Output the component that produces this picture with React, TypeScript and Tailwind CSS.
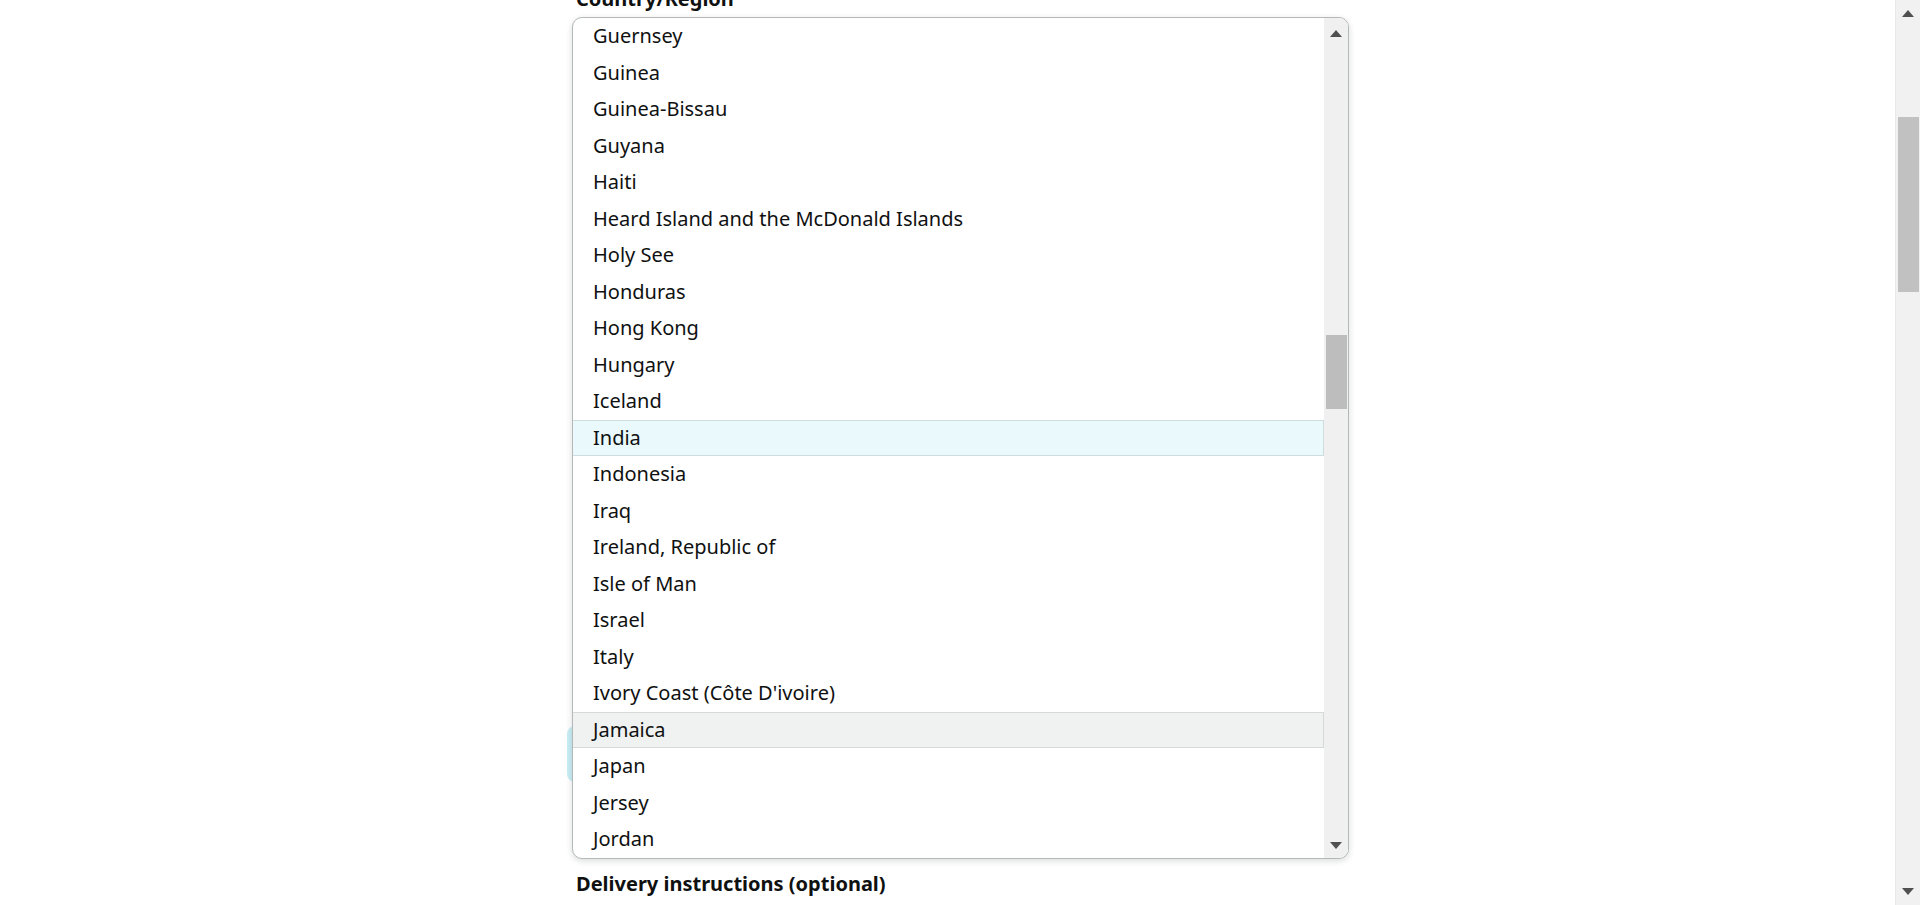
import React from 'react';

const countries = [
  'Guernsey',
  'Guinea',
  'Guinea-Bissau',
  'Guyana',
  'Haiti',
  'Heard Island and the McDonald Islands',
  'Holy See',
  'Honduras',
  'Hong Kong',
  'Hungary',
  'Iceland',
  'India',
  'Indonesia',
  'Iraq',
  'Ireland, Republic of',
  'Isle of Man',
  'Israel',
  'Italy',
  "Ivory Coast (Côte D'ivoire)",
  'Jamaica',
  'Japan',
  'Jersey',
  'Jordan',
];

const Arrow: React.FC<{ up?: boolean }> = ({ up }) => (
  <svg width="12" height="7" viewBox="0 0 12 7" className="block">
    {up ? <polygon points="6,0 12,7 0,7" fill="#505050" /> : <polygon points="0,0 12,0 6,7" fill="#505050" />}
  </svg>
);

const Row: React.FC<{ name: string }> = ({ name }) => {
  if (name === 'India') {
    return (
      <div className="h-[36.5px] -ml-px flex items-center pl-[20px] bg-[#e9f9fc] border border-[#cfdde0] border-l-[#007185]">
        {name}
      </div>
    );
  }
  if (name === 'Jamaica') {
    return (
      <div className="h-[36.5px] -ml-px flex items-center pl-[20px] bg-[#f0f2f2] border border-[#d5d9d9]">
        {name}
      </div>
    );
  }
  return <div className="h-[36.5px] flex items-center pl-5">{name}</div>;
};

export default function App() {
  return (
    <div
      className="h-[905px] w-[1920px] overflow-hidden flex bg-white text-[#0f1111]"
      style={{ fontFamily: '"Noto Sans", "Open Sans", Arial, sans-serif' }}
    >
      {/* ページ本体 */}
      <div className="flex-1 min-w-0">
        <div className="ml-[572px] w-[777px] flex flex-col">
          <div className="-mt-[13px] h-[30px] pl-[4px] text-[20px] font-bold leading-[24px]">Country/Region</div>

          <div className="relative">
            {/* 下にあるボタンのフォーカス */}
            <div className="absolute left-[-5px] top-[709px] w-[40px] h-[56px] rounded-lg bg-[#c9eef5]" />

            {/* ドロップダウン */}
            <div className="relative h-[842px] rounded-[10px] border border-[#b4b8b8] bg-white shadow-[0_2px_6px_rgba(15,17,17,0.15)] flex overflow-hidden">
              <div className="flex-1 min-w-0 text-[20px]">
                {countries.map((c) => (
                  <Row key={c} name={c} />
                ))}
              </div>
              <div className="w-[24px] bg-[#f0f0f0] flex flex-col items-center">
                <div className="pt-[12px]">
                  <Arrow up />
                </div>
                <div className="mt-[298px] w-[21px] h-[74px] bg-[#bdbdbd]" />
                <div className="flex-1" />
                <div className="pb-[9px]">
                  <Arrow />
                </div>
              </div>
            </div>
          </div>

          <div className="mt-[13px] pl-[4px] text-[20px] font-bold leading-[24px]">Delivery instructions (optional)</div>
        </div>
      </div>

      {/* ページのスクロールバー */}
      <div className="w-[25px] bg-[#f1f1f1] border-l border-[#e8e8e8] flex flex-col items-center">
        <div className="pt-[10px]">
          <Arrow up />
        </div>
        <div className="mt-[100px] w-[21px] h-[175px] bg-[#c1c1c1]" />
        <div className="flex-1" />
        <div className="pb-[10px]">
          <Arrow />
        </div>
      </div>
    </div>
  );
}
